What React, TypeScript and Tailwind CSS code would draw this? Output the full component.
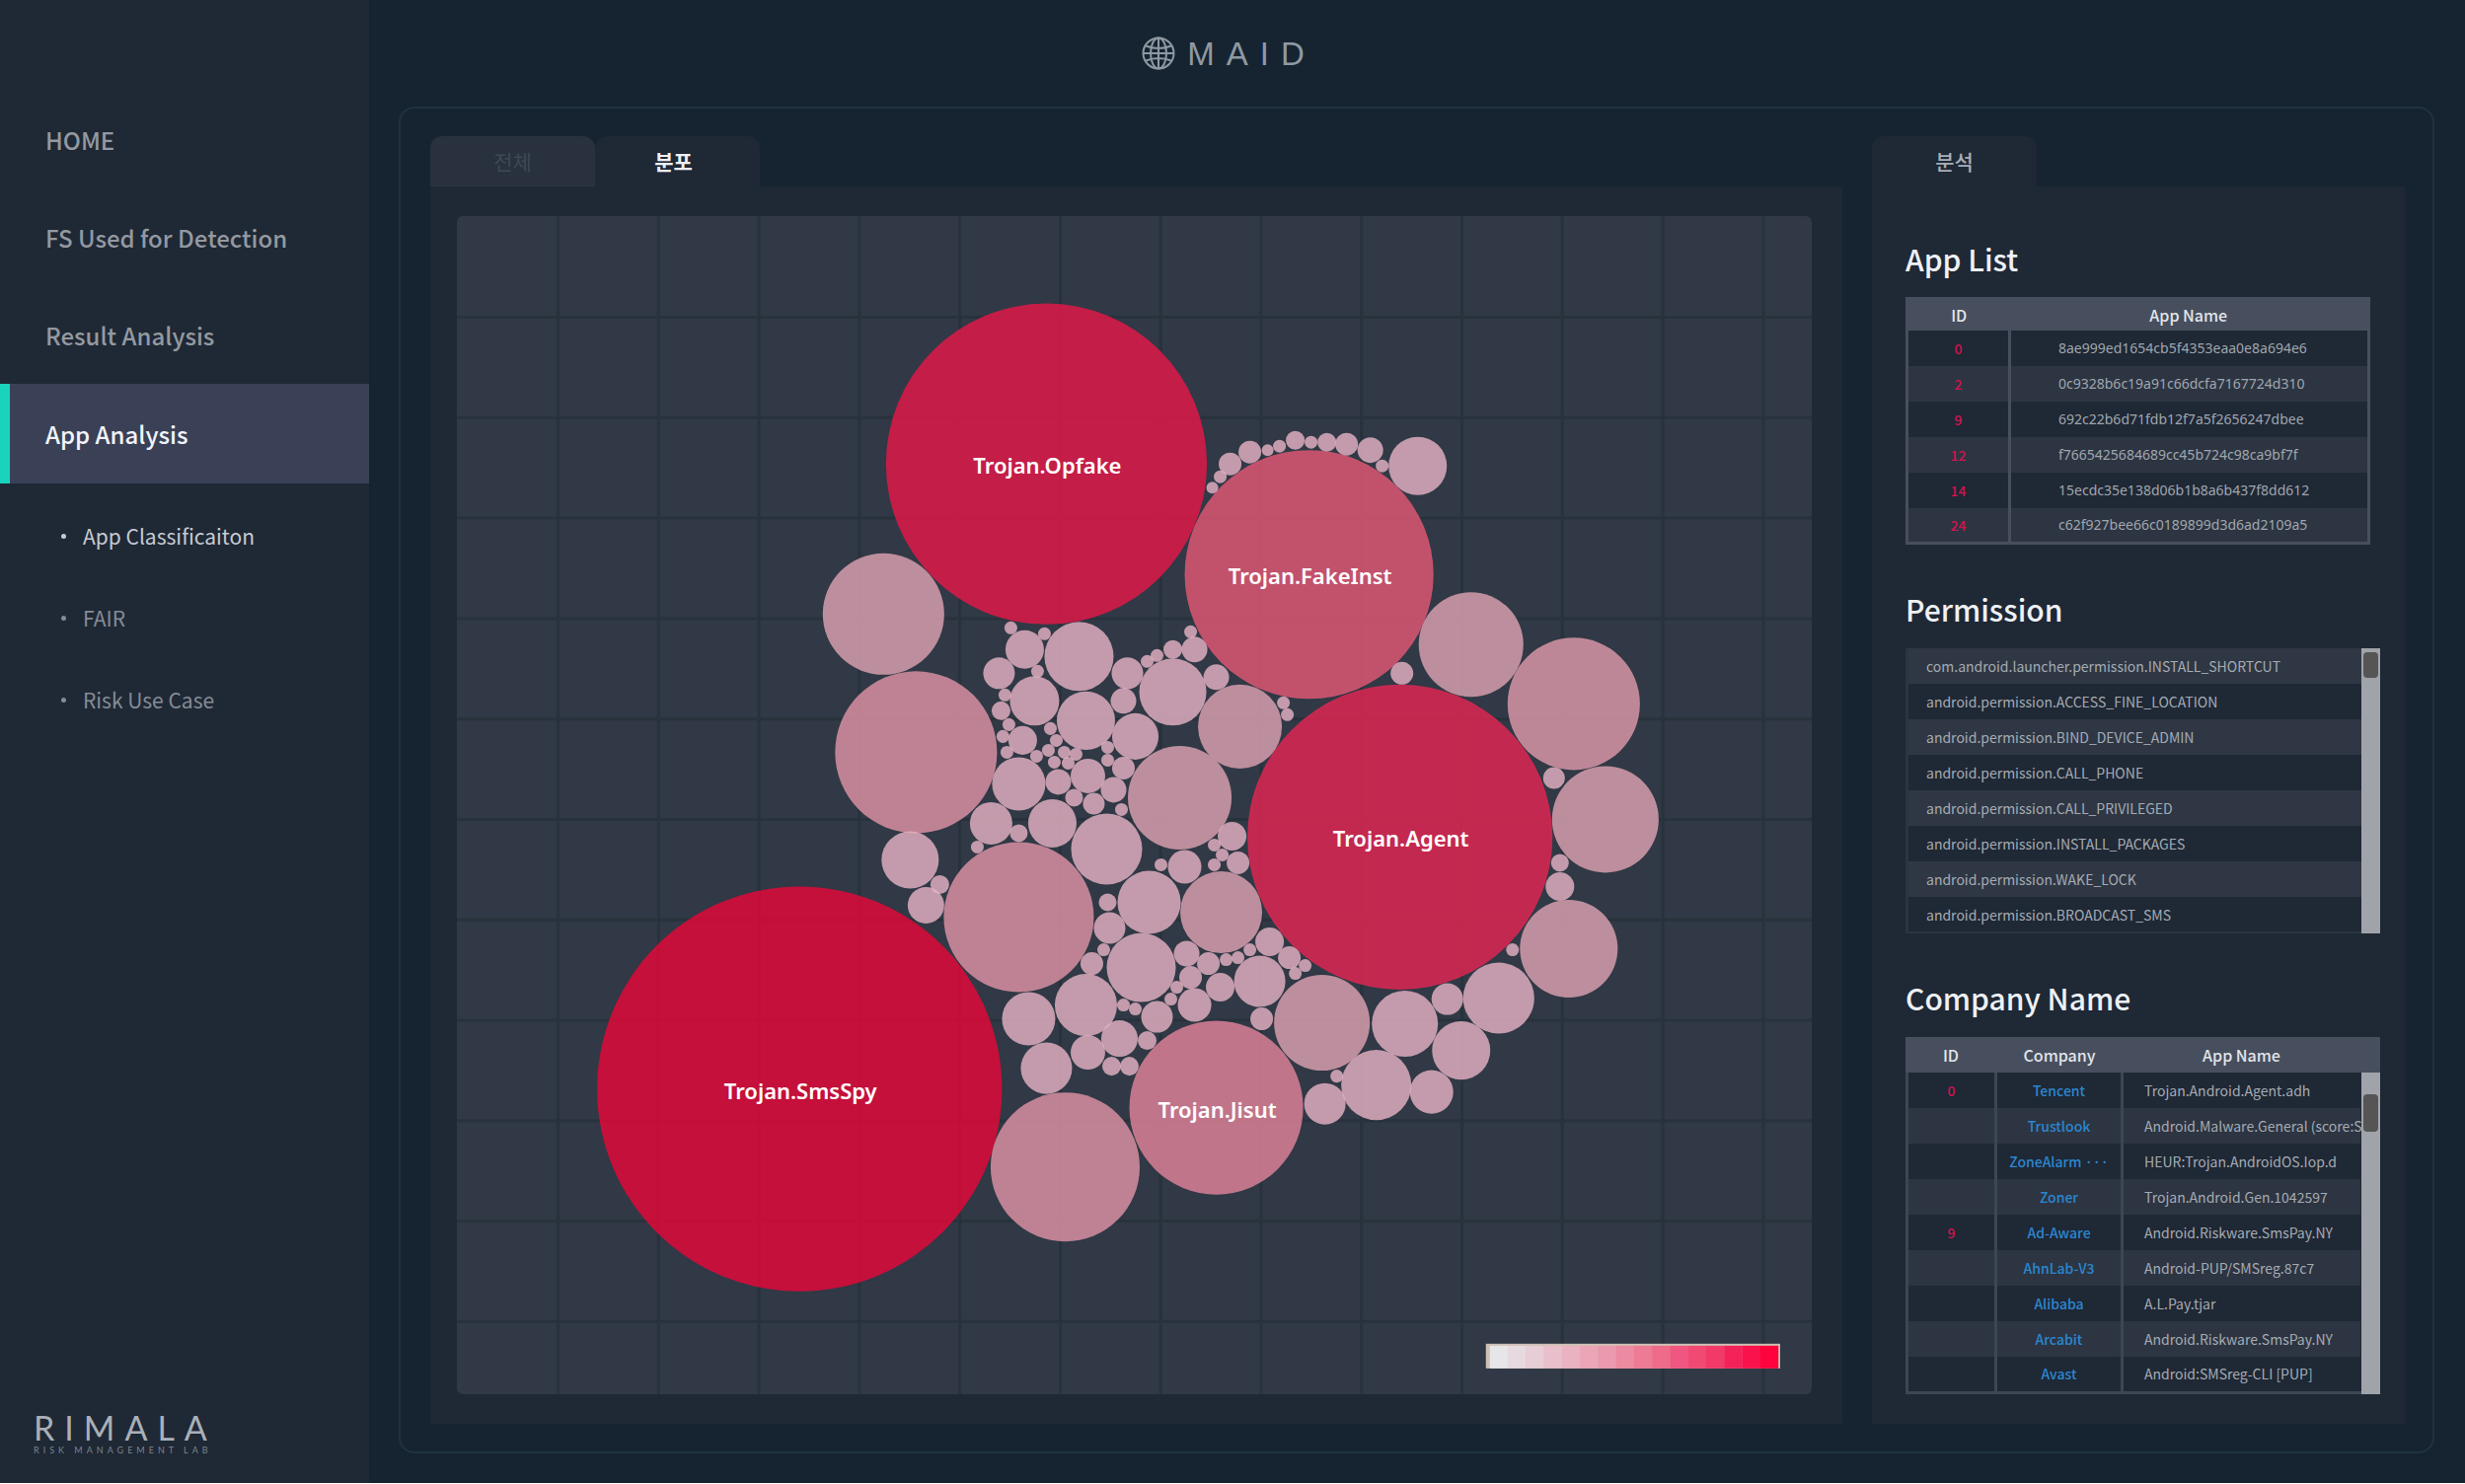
import React, { useState } from 'react';

type Bubble = [x: number, y: number, r: number];

interface FamilyBubble {
  name?: string;
  at: Bubble;
  fill: string;
}

const menu = ['HOME', 'FS Used for Detection', 'Result Analysis', 'App Analysis'];
const subMenu = ['App Classificaiton', 'FAIR', 'Risk Use Case'];

const apps = [
  { id: 0, name: '8ae999ed1654cb5f4353eaa0e8a694e6' },
  { id: 2, name: '0c9328b6c19a91c66dcfa7167724d310' },
  { id: 9, name: '692c22b6d71fdb12f7a5f2656247dbee' },
  { id: 12, name: 'f7665425684689cc45b724c98ca9bf7f' },
  { id: 14, name: '15ecdc35e138d06b1b8a6b437f8dd612' },
  { id: 24, name: 'c62f927bee66c0189899d3d6ad2109a5' },
];

const permissions = [
  'com.android.launcher.permission.INSTALL_SHORTCUT',
  'android.permission.ACCESS_FINE_LOCATION',
  'android.permission.BIND_DEVICE_ADMIN',
  'android.permission.CALL_PHONE',
  'android.permission.CALL_PRIVILEGED',
  'android.permission.INSTALL_PACKAGES',
  'android.permission.WAKE_LOCK',
  'android.permission.BROADCAST_SMS',
];

const companies = [
  { id: '0', company: 'Tencent', app: 'Trojan.Android.Agent.adh' },
  { id: '', company: 'Trustlook', app: 'Android.Malware.General (score:S' },
  { id: '', company: 'ZoneAlarm ···', app: 'HEUR:Trojan.AndroidOS.Iop.d' },
  { id: '', company: 'Zoner', app: 'Trojan.Android.Gen.1042597' },
  { id: '9', company: 'Ad-Aware', app: 'Android.Riskware.SmsPay.NY' },
  { id: '', company: 'AhnLab-V3', app: 'Android-PUP/SMSreg.87c7' },
  { id: '', company: 'Alibaba', app: 'A.L.Pay.tjar' },
  { id: '', company: 'Arcabit', app: 'Android.Riskware.SmsPay.NY' },
  { id: '', company: 'Avast', app: 'Android:SMSreg-CLI [PUP]' },
];

const families: FamilyBubble[] = [
  { name: 'Trojan.SmsSpy', at: [810, 1103, 205], fill: '#ea0637' },
  { name: 'Trojan.Opfake', at: [1060, 470, 162.5], fill: '#ea1648' },
  { name: 'Trojan.Agent', at: [1418, 848, 154.5], fill: '#e92552' },
  { name: 'Trojan.FakeInst', at: [1326, 582, 126], fill: '#e75976' },
  { name: 'Trojan.Jisut', at: [1232, 1122, 88], fill: '#e5849b' },
  { at: [928, 762, 82], fill: '#e295a8' },
  { at: [1032, 929, 76], fill: '#e295a8' },
  { at: [1079, 1182, 75.5], fill: '#e295a8' },
  { at: [1594, 713, 67], fill: '#e29bad' },
  { at: [895, 622, 61.5], fill: '#e1a4b3' },
  { at: [1626, 830, 54], fill: '#e1a4b3' },
  { at: [1490, 653, 53], fill: '#e1a4b3' },
  { at: [1195, 808, 52.5], fill: '#e1a4b3' },
  { at: [1589, 961, 49.5], fill: '#e1a4b3' },
  { at: [1339, 1036, 48.5], fill: '#e1a4b3' },
  { at: [1256, 736, 42.5], fill: '#e1a4b3' },
  { at: [1237, 924, 41.5], fill: '#e1a4b3' },
];

const smallBubbles: Bubble[] = [
  // outer left
  [922, 871, 29], [952, 896, 9.5], [938, 917, 18.5],
  // outer right
  [1420, 682, 11.5], [1436, 472, 29.5], [1574, 788, 11], [1580, 874, 9], [1580, 898, 14.5],
  [1532, 962, 6.5], [1518, 1011, 36], [1466, 1012, 16], [1423, 1037, 33.5], [1480, 1064, 29.5],
  [1450, 1106, 22], [1394, 1099, 35.5], [1342, 1118, 21], [1354, 1090, 6.5], [1278, 1032, 11.5],
  // arc over FakeInst
  [1228, 494, 6], [1236, 483, 6.5], [1246, 470, 11.5], [1266, 458, 11.5], [1284, 456, 6],
  [1296, 452, 6.5], [1312, 446, 9.5], [1328, 448, 6.5], [1344, 448, 9.5], [1364, 450, 11.5],
  [1388, 456, 13], [1400, 472, 6.5],
  // upper cluster
  [1024, 636, 6.5], [1058, 642, 6.5], [1038, 658, 19.5], [1093, 665, 35], [1012, 682, 16],
  [1051, 680, 6.5], [1018, 704, 6.5], [1048, 710, 25], [1014, 720, 9.5], [1022, 734, 6.5],
  [1016, 746, 6.5], [1036, 750, 14.5], [1020, 762, 6.5], [1050, 766, 6.5], [1064, 738, 6.5],
  [1070, 750, 6.5], [1062, 760, 6.5], [1068, 772, 6.5], [1078, 762, 6.5], [1082, 773, 6.5],
  [1090, 764, 6.5], [1100, 730, 29.5], [1122, 757, 6.5], [1122, 770, 6.5], [1142, 682, 16],
  [1138, 710, 13], [1150, 746, 23.5], [1138, 778, 11.5], [1128, 800, 13], [1102, 786, 17.5],
  [1072, 792, 13], [1088, 808, 9], [1108, 814, 11], [1136, 820, 6.5], [1032, 794, 27],
  [1004, 834, 21.5], [1032, 844, 9], [1066, 834, 24.5], [1162, 670, 6.5], [1172, 664, 6.5],
  [1188, 658, 9.5], [1210, 658, 13], [1206, 640, 6.5], [1232, 686, 13], [1188, 701, 34],
  [1300, 712, 6.5], [1304, 724, 6.5], [1248, 847, 14.5],
  // lower cluster
  [990, 858, 6.5], [1121, 860, 36], [1176, 876, 6.5], [1200, 878, 17], [1230, 856, 6.5],
  [1238, 866, 6.5], [1230, 876, 6.5], [1254, 874, 11.5], [1164, 914, 32], [1122, 914, 9],
  [1124, 940, 16], [1118, 962, 6.5], [1106, 976, 11.5], [1156, 980, 35], [1100, 1018, 31.5],
  [1042, 1032, 27], [1060, 1082, 26], [1102, 1066, 17.5], [1134, 1052, 18.5], [1162, 1054, 9.5],
  [1126, 1080, 9.5], [1144, 1080, 9.5], [1138, 1018, 6.5], [1150, 1022, 6.5], [1172, 1030, 16],
  [1192, 1000, 6.5], [1186, 1012, 6.5], [1210, 1018, 17], [1206, 990, 11.5], [1202, 966, 13],
  [1224, 976, 11.5], [1236, 1000, 14.5], [1242, 972, 6.5], [1254, 970, 6.5], [1266, 962, 6.5],
  [1286, 954, 14.5], [1306, 970, 11.5], [1322, 978, 6.5], [1312, 986, 6.5], [1276, 994, 26],
];

const legend = [
  '#e6e6e8', '#e6d9e0', '#e7cdd6', '#e8bfca', '#e9b3c1', '#eaa6b7', '#eb99ae', '#ec8aa2',
  '#ed7b96', '#ee6c8a', '#ef5680', '#f04a74', '#f13a67', '#f5225a', '#fa124c', '#ff033c',
];

const columns = Array.from({ length: 13 }, (_, i) => 565.5 + i * 101.7);
const rows = Array.from({ length: 11 }, (_, i) => 321.5 + i * 101.7);

const GlobeIcon = () => (
  <svg viewBox="0 0 34 34" className="size-[34px]" fill="none" stroke="currentColor" strokeWidth="2" aria-hidden="true">
    <circle cx="17" cy="17" r="15.5" />
    <ellipse cx="17" cy="17" rx="8" ry="15.5" />
    <path d="M17 1.5v31M1.5 17h31M4 9.5c8 3 18 3 26 0M4 24.5c8-3 18-3 26 0" />
  </svg>
);

const Sidebar = () => (
  <aside className="flex w-[374px] flex-none flex-col bg-[#1f2835] pt-[92px]">
    <nav>
      <ul>
        {menu.map((item) => (
          <li key={item}>
            <a
              href="#"
              className={
                item === 'App Analysis'
                  ? 'flex h-[101px] items-center border-l-10 border-[#19d3bd] bg-[#3a4157] pl-9 text-[24px] font-medium text-[#f1f3f8]'
                  : 'flex h-[99px] items-center pl-[46px] text-[24px] font-medium text-[#9399a0]'
              }
            >
              {item}
            </a>
          </li>
        ))}
      </ul>
      <ul className="pt-3">
        {subMenu.map((item, i) => (
          <li key={item}>
            <a
              href="#"
              className={
                i === 0
                  ? 'flex h-[83px] items-center pl-[62px] text-[21px] text-[#c6cbd1]'
                  : 'flex h-[83px] items-center pl-[62px] text-[21px] text-[#858c95]'
              }
            >
              <span className="mr-[17px] size-[5px] rounded-full bg-current" />
              {item}
            </a>
          </li>
        ))}
      </ul>
    </nav>
    <div className="mt-auto pb-[28px] pl-[34px] text-[#a9b0b8]">
      <p className="font-['Lato'] text-[34px] leading-[36px] tracking-[10px]">RIMALA</p>
      <p className="font-['Lato'] text-[9px] leading-[10px] tracking-[4px] text-[#7d858e]">RISK MANAGEMENT LAB</p>
    </div>
  </aside>
);

const BubbleChart = () => (
  <svg viewBox="463 219 1372 1193" className="block w-full rounded-md bg-[#303945]" role="img" aria-label="Malware family distribution">
    <g stroke="#28323c" strokeWidth="3">
      {columns.map((x) => <line key={x} x1={x} x2={x} y1="219" y2="1412" />)}
      {rows.map((y) => <line key={y} x1="463" x2="1835" y1={y} y2={y} />)}
    </g>
    <g fillOpacity="0.8">
      {families.map(({ at: [x, y, r], fill }) => <circle key={`${x}-${y}`} cx={x} cy={y} r={r} fill={fill} />)}
      {smallBubbles.map(([x, y, r]) => <circle key={`${x}-${y}`} cx={x} cy={y} r={r} fill="#e8b4c5" />)}
    </g>
    <g className="font-['Noto_Sans'] text-[22px] font-semibold" fill="#fff" textAnchor="middle">
      {families.filter((f) => f.name).map(({ name, at: [x, y] }) => (
        <text key={name} x={x + 1} y={y + 10}>{name}</text>
      ))}
    </g>
    <rect x="1505" y="1361" width="298" height="25" fill="#cfc0b4" />
    {legend.map((color, i) => (
      <rect key={color} x={1509 + i * 18.25} y="1363" width="18.5" height="23" fill={color} />
    ))}
  </svg>
);

const Scrollbar = ({ offset }: { offset: 'top' | 'lower' }) => (
  <div className="w-[19px] flex-none bg-[#a0a4aa] px-[2px]">
    <div className={offset === 'top' ? 'mt-1 h-[26px] rounded-sm bg-[#555556]' : 'mt-[22px] h-[38px] rounded-sm bg-[#555556]'} />
  </div>
);

const AppListTable = () => (
  <table className="mt-[17px] w-[471px] table-fixed border-collapse border-3 border-[#474f5e] text-[14px] leading-5">
    <colgroup>
      <col className="w-[104px]" />
      <col />
    </colgroup>
    <thead className="bg-[#474f5e] text-[16px] text-[#e2e5ea]">
      <tr className="h-[32px]">
        <th className="font-medium">ID</th>
        <th className="font-medium">App Name</th>
      </tr>
    </thead>
    <tbody>
      {apps.map(({ id, name }) => (
        <tr key={id} className="h-9 even:bg-[#2d3542]">
          <td className="border-r-3 border-[#474f5e] text-center font-medium text-[#d0144f]">{id}</td>
          <td className="pl-12 text-left font-['Noto_Sans'] text-[#a0a6ae]">{name}</td>
        </tr>
      ))}
    </tbody>
  </table>
);

const PermissionList = () => (
  <div className="mt-[18px] flex h-[289px] w-[481px]">
    <ul className="flex-1 border-b-2 border-l-3 border-[#2a3541] text-[14px] leading-5 text-[#a5abb3]">
      {permissions.map((p) => (
        <li key={p} className="flex h-9 items-center pl-[18px] odd:bg-[#2f3744]">{p}</li>
      ))}
    </ul>
    <Scrollbar offset="top" />
  </div>
);

const CompanyTable = () => (
  <div className="mt-[18px] w-[481px] bg-[#474f5e]">
    <table className="w-full table-fixed border-collapse text-[16px] text-[#e2e5ea]">
      <colgroup>
        <col className="w-[92px]" />
        <col className="w-[128px]" />
        <col />
      </colgroup>
      <thead>
        <tr className="h-9">
          <th className="font-medium">ID</th>
          <th className="font-medium">Company</th>
          <th className="pr-5 font-medium">App Name</th>
        </tr>
      </thead>
    </table>
    <div className="flex bg-[#1f2835]">
      <table className="w-[462px] flex-none table-fixed border-collapse border-x-3 border-b-3 border-[#3d4655] border-r-transparent text-[14px] leading-5">
        <colgroup>
          <col className="w-[90px]" />
          <col className="w-[128px]" />
          <col />
        </colgroup>
        <tbody>
          {companies.map(({ id, company, app }) => (
            <tr key={company} className="h-9 even:bg-[#2d3542]">
              <td className="border-r-3 border-[#3d4655] text-center font-medium text-[#d0144f]">{id}</td>
              <td className="border-r-3 border-[#3d4655] text-center font-medium whitespace-nowrap text-[#2b86cf]">{company}</td>
              <td className="pl-[21px] whitespace-nowrap text-[#a5abb3]">
                <span className="relative z-10">{app}</span>
              </td>
            </tr>
          ))}
        </tbody>
      </table>
      <Scrollbar offset="lower" />
    </div>
  </div>
);

export default function App() {
  const [tab, setTab] = useState('분포');

  return (
    <div className="flex min-h-screen border-b-2 border-white bg-[#152430] font-['Noto_Sans_CJK_KR',sans-serif]">
      <Sidebar />
      <main className="flex min-w-0 flex-1 flex-col pr-[31px] pb-[30px] pl-[30px]">
        <header className="flex h-[108px] items-center justify-center gap-3 pr-[380px] text-[#8f99a3]">
          <GlobeIcon />
          <h1 className="font-['Liberation_Sans'] text-[33px] leading-none tracking-[12px]">MAID</h1>
        </header>
        <div className="flex flex-1 gap-[30px] rounded-2xl border-2 border-[#20333e] pt-7 pr-[28px] pb-7 pl-[30px]">
          <section className="flex min-w-0 flex-1 flex-col">
            <div className="flex">
              {['전체', '분포'].map((name) => (
                <button
                  key={name}
                  type="button"
                  onClick={() => setTab(name)}
                  className={
                    name === tab
                      ? 'h-[51px] w-[167px] rounded-t-xl bg-[#1f2835] pr-2 text-[21px] font-bold text-[#eef0f4]'
                      : 'h-[51px] w-[167px] rounded-t-xl bg-[#28313d] text-[21px] text-[#3f4853]'
                  }
                >
                  {name}
                </button>
              ))}
            </div>
            <div className="flex-1 bg-[#1f2835] pt-[30px] pr-[31px] pb-[30px] pl-[27px]">
              <BubbleChart />
            </div>
          </section>
          <section className="flex w-[540px] flex-none flex-col">
            <button type="button" className="h-[51px] w-[167px] rounded-t-xl bg-[#1f2835] text-[21px] font-medium text-[#a9afb7]">분석</button>
            <div className="flex-1 bg-[#1f2835] pl-[34px]">
              <h2 className="pt-[51px] text-[30px] leading-[44px] font-medium text-[#eef1f5]">App List</h2>
              <AppListTable />
              <h2 className="pt-[43px] text-[30px] leading-[44px] font-medium text-[#eef1f5]">Permission</h2>
              <PermissionList />
              <h2 className="pt-[43px] text-[30px] leading-[44px] font-medium text-[#eef1f5]">Company Name</h2>
              <CompanyTable />
            </div>
          </section>
        </div>
      </main>
    </div>
  );
}
